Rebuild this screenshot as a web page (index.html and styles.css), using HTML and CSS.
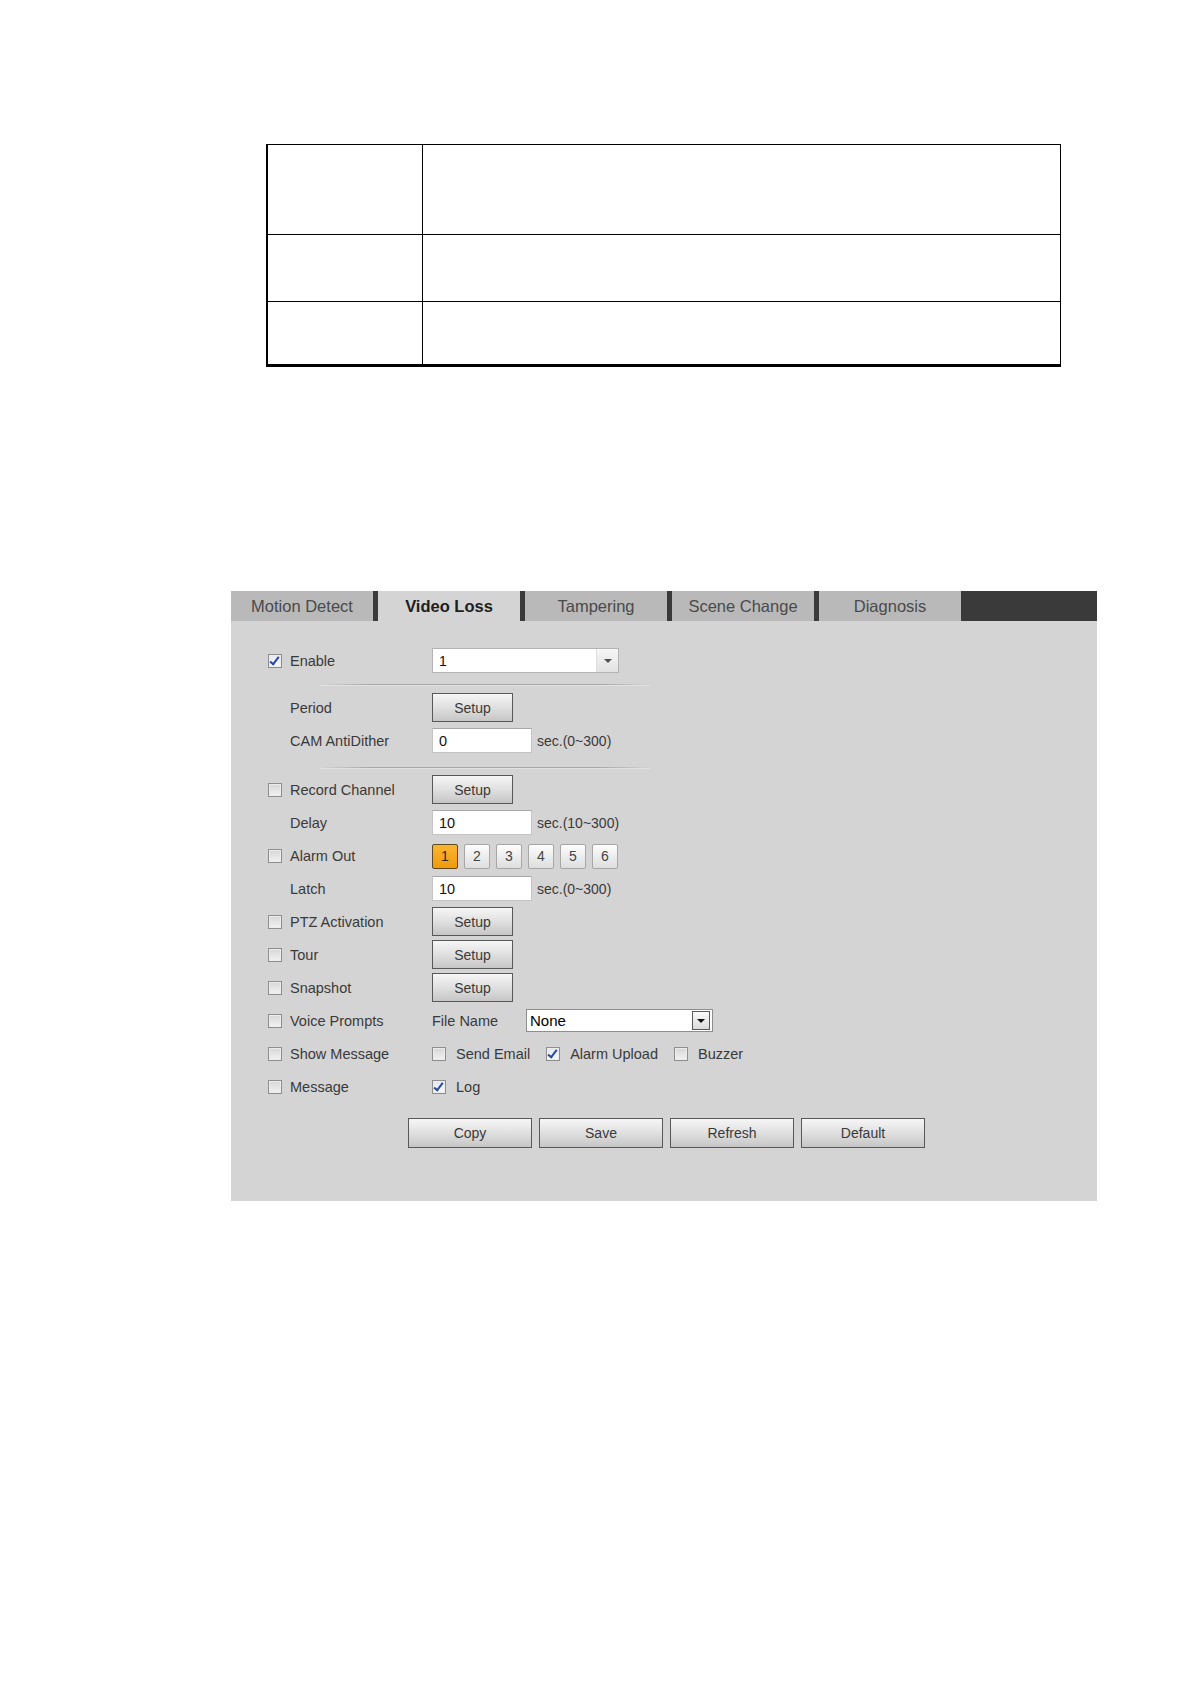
FILE: index.html
```html
<!DOCTYPE html>
<html lang="en">
<head>
<meta charset="utf-8">
<title>Video Loss</title>
<link rel="stylesheet" href="styles.css">
</head>
<body>
<div class="doc-table">
  <div class="trow r1"><div class="tc key"></div><div class="tc val"></div></div>
  <div class="trow r2"><div class="tc key"></div><div class="tc val"></div></div>
  <div class="trow r3"><div class="tc key"></div><div class="tc val"></div></div>
</div>

<div class="panel">
  <div class="tabs">
    <div class="tab">Motion Detect</div>
    <div class="tab active">Video Loss</div>
    <div class="tab">Tampering</div>
    <div class="tab">Scene Change</div>
    <div class="tab">Diagnosis</div>
  </div>
  <div class="body">
    <div class="row">
      <span class="cb checked"></span><span class="lbl">Enable</span>
      <div class="ctl"><div class="select sel-enable"><span class="sel-text">1</span><span class="sel-arrow"><span class="tri"></span></span></div></div>
    </div>
    <div class="sep"></div>
    <div class="row">
      <span></span><span class="lbl">Period</span>
      <div class="ctl"><button class="btn setup">Setup</button></div>
    </div>
    <div class="row">
      <span></span><span class="lbl">CAM AntiDither</span>
      <div class="ctl"><span class="input">0</span><span class="hint">sec.(0~300)</span></div>
    </div>
    <div class="sep sep2"></div>
    <div class="row">
      <span class="cb"></span><span class="lbl">Record Channel</span>
      <div class="ctl"><button class="btn setup">Setup</button></div>
    </div>
    <div class="row">
      <span></span><span class="lbl">Delay</span>
      <div class="ctl"><span class="input">10</span><span class="hint">sec.(10~300)</span></div>
    </div>
    <div class="row">
      <span class="cb"></span><span class="lbl">Alarm Out</span>
      <div class="ctl nums">
        <span class="num on">1</span><span class="num">2</span><span class="num">3</span><span class="num">4</span><span class="num">5</span><span class="num">6</span>
      </div>
    </div>
    <div class="row">
      <span></span><span class="lbl">Latch</span>
      <div class="ctl"><span class="input">10</span><span class="hint">sec.(0~300)</span></div>
    </div>
    <div class="row">
      <span class="cb"></span><span class="lbl">PTZ Activation</span>
      <div class="ctl"><button class="btn setup">Setup</button></div>
    </div>
    <div class="row">
      <span class="cb"></span><span class="lbl">Tour</span>
      <div class="ctl"><button class="btn setup">Setup</button></div>
    </div>
    <div class="row">
      <span class="cb"></span><span class="lbl">Snapshot</span>
      <div class="ctl"><button class="btn setup">Setup</button></div>
    </div>
    <div class="row">
      <span class="cb"></span><span class="lbl">Voice Prompts</span>
      <div class="ctl"><span class="lbl fname">File Name</span><div class="select sel-none"><span class="sel-text">None</span><span class="sel-arrow box"><span class="tri dark"></span></span></div></div>
    </div>
    <div class="row">
      <span class="cb"></span><span class="lbl">Show Message</span>
      <div class="ctl opts">
        <span class="opt"><span class="cb"></span><span class="lbl">Send Email</span></span>
        <span class="opt"><span class="cb checked"></span><span class="lbl">Alarm Upload</span></span>
        <span class="opt"><span class="cb"></span><span class="lbl">Buzzer</span></span>
      </div>
    </div>
    <div class="row">
      <span class="cb"></span><span class="lbl">Message</span>
      <div class="ctl opts">
        <span class="opt"><span class="cb checked"></span><span class="lbl">Log</span></span>
      </div>
    </div>
    <div class="actions">
      <button class="btn wide">Copy</button>
      <button class="btn wide">Save</button>
      <button class="btn wide">Refresh</button>
      <button class="btn wide">Default</button>
    </div>
  </div>
</div>
</body>
</html>
```

FILE: styles.css
```css
html, body {
  margin: 0;
  padding: 0;
  background: #ffffff;
}
body {
  font-family: "Liberation Sans", Arial, sans-serif;
  width: 1191px;
  height: 1684px;
  overflow: hidden;
}

/* document table */
.doc-table {
  margin: 144px 0 0 266px;
  width: 795px;
  border-top: 1.5px solid #000;
  border-left: 2px solid #000;
  border-right: 1.5px solid #000;
  border-bottom: 3px solid #000;
  box-sizing: border-box;
}
.trow {
  display: grid;
  grid-template-columns: 155px 1fr;
}
.trow + .trow {
  border-top: 1.5px solid #000;
}
.r1 { height: 89px; }
.r2 { height: 66px; }
.r3 { height: 62px; }
.tc.key {
  border-right: 1.5px solid #000;
}

/* panel */
.panel {
  margin: 224px 0 0 231px;
  width: 866px;
  height: 610px;
  background: #d4d4d4;
}
.tabs {
  height: 30px;
  background: #3a3a3a;
  display: flex;
  gap: 5px;
}
.tab {
  width: 142px;
  height: 30px;
  line-height: 30px;
  text-align: center;
  background: #b9b9b9;
  color: #4a4a4a;
  font-size: 16.5px;
}
.tab.active {
  background: #d4d4d4;
  color: #1e1e1e;
  font-weight: bold;
}

.body {
  padding: 23px 0 0 37px;
}
.row {
  display: grid;
  grid-template-columns: 22px 142px auto;
  align-items: center;
  height: 33px;
}
.lbl {
  font-size: 14.5px;
  color: #3a3a3a;
  white-space: nowrap;
}
.ctl {
  display: flex;
  align-items: center;
}

/* checkbox */
.cb {
  display: inline-block;
  width: 12px;
  height: 12px;
  border: 1px solid #8e8e8e;
  background: linear-gradient(#d6d6d6, #f2f2f2);
  position: relative;
  box-shadow: inset 0 0 0 1px #ececec;
}
.cb.checked {
  background: linear-gradient(#e4e8f2, #f8f8f8);
}
.cb.checked::after {
  content: "";
  position: absolute;
  left: 3px;
  top: 0px;
  width: 3px;
  height: 8px;
  border-right: 2px solid #2a48a0;
  border-bottom: 2px solid #2a48a0;
  transform: rotate(38deg);
}

/* separator */
.sep {
  margin: 7px 0 6px 52px;
  width: 330px;
  height: 1px;
  background: linear-gradient(90deg, rgba(170,170,170,0), #a8a8a8 15%, #a8a8a8 85%, rgba(170,170,170,0));
  box-shadow: 0 1px 0 #e2e2e2;
}
.sep2 {
  margin: 10px 0 5px 52px;
}

/* select */
.select {
  display: flex;
  align-items: center;
  background: #fff;
  border: 1px solid #b4b4b4;
  box-sizing: border-box;
  width: 187px;
}
.sel-enable {
  height: 25px;
}
.sel-none {
  height: 23px;
  border-color: #8e8e8e;
}
.sel-text {
  flex: 1;
  padding-left: 6px;
  font-size: 14px;
  color: #111;
}
.sel-none .sel-text {
  padding-left: 3px;
  font-size: 15px;
  color: #000;
}
.sel-arrow {
  width: 21px;
  height: 100%;
  border-left: 1px solid #dedede;
  background: linear-gradient(#f6f6f6, #e2e2e2);
  display: flex;
  align-items: center;
  justify-content: center;
}
.sel-arrow.box {
  width: 16px;
  height: 17px;
  margin-right: 2px;
  border: 1px solid #5a5a5a;
  background: linear-gradient(#fafafa, #dcdcdc);
}
.tri {
  width: 0;
  height: 0;
  border-left: 4px solid transparent;
  border-right: 4px solid transparent;
  border-top: 4px solid #505050;
}
.tri.dark {
  border-top-color: #111;
}

/* inputs */
.input {
  display: inline-block;
  box-sizing: border-box;
  width: 100px;
  height: 25px;
  line-height: 25px;
  background: #fff;
  border: 1px solid #c4c4c4;
  border-top-color: #a8a8a8;
  padding-left: 6px;
  font-size: 14.5px;
  color: #111;
}
.hint {
  margin-left: 5px;
  font-size: 14px;
  color: #3a3a3a;
}

/* buttons */
.btn {
  font-family: "Liberation Sans", Arial, sans-serif;
  font-size: 14px;
  color: #3a3a3a;
  border: 1px solid #585858;
  background: linear-gradient(#f6f6f6 0%, #e2e2e2 45%, #c6c6c6 100%);
  padding: 0;
  margin: 0;
  box-sizing: border-box;
}
.btn.setup {
  width: 81px;
  height: 29px;
}
.btn.wide {
  width: 124px;
  height: 30px;
}

/* alarm out numbers */
.nums {
  gap: 6px;
  padding-top: 2px;
}
.num {
  display: inline-block;
  box-sizing: border-box;
  width: 26px;
  height: 25px;
  line-height: 23px;
  text-align: center;
  font-size: 14px;
  color: #444;
  border: 1px solid #a6a6a6;
  border-radius: 2px;
  background: linear-gradient(#fdfdfd, #dedede);
}
.num.on {
  border-color: #5e4a20;
  background: linear-gradient(#fbb531, #f09a0c);
  color: #2a2a2a;
}

/* inline options */
.fname {
  width: 94px;
}
.opts {
  gap: 0;
}
.opt {
  display: inline-flex;
  align-items: center;
  margin-right: 16px;
}
.opt .cb {
  margin-right: 10px;
}

/* action buttons */
.actions {
  display: flex;
  gap: 7px;
  margin: 15px 0 0 140px;
}
```
